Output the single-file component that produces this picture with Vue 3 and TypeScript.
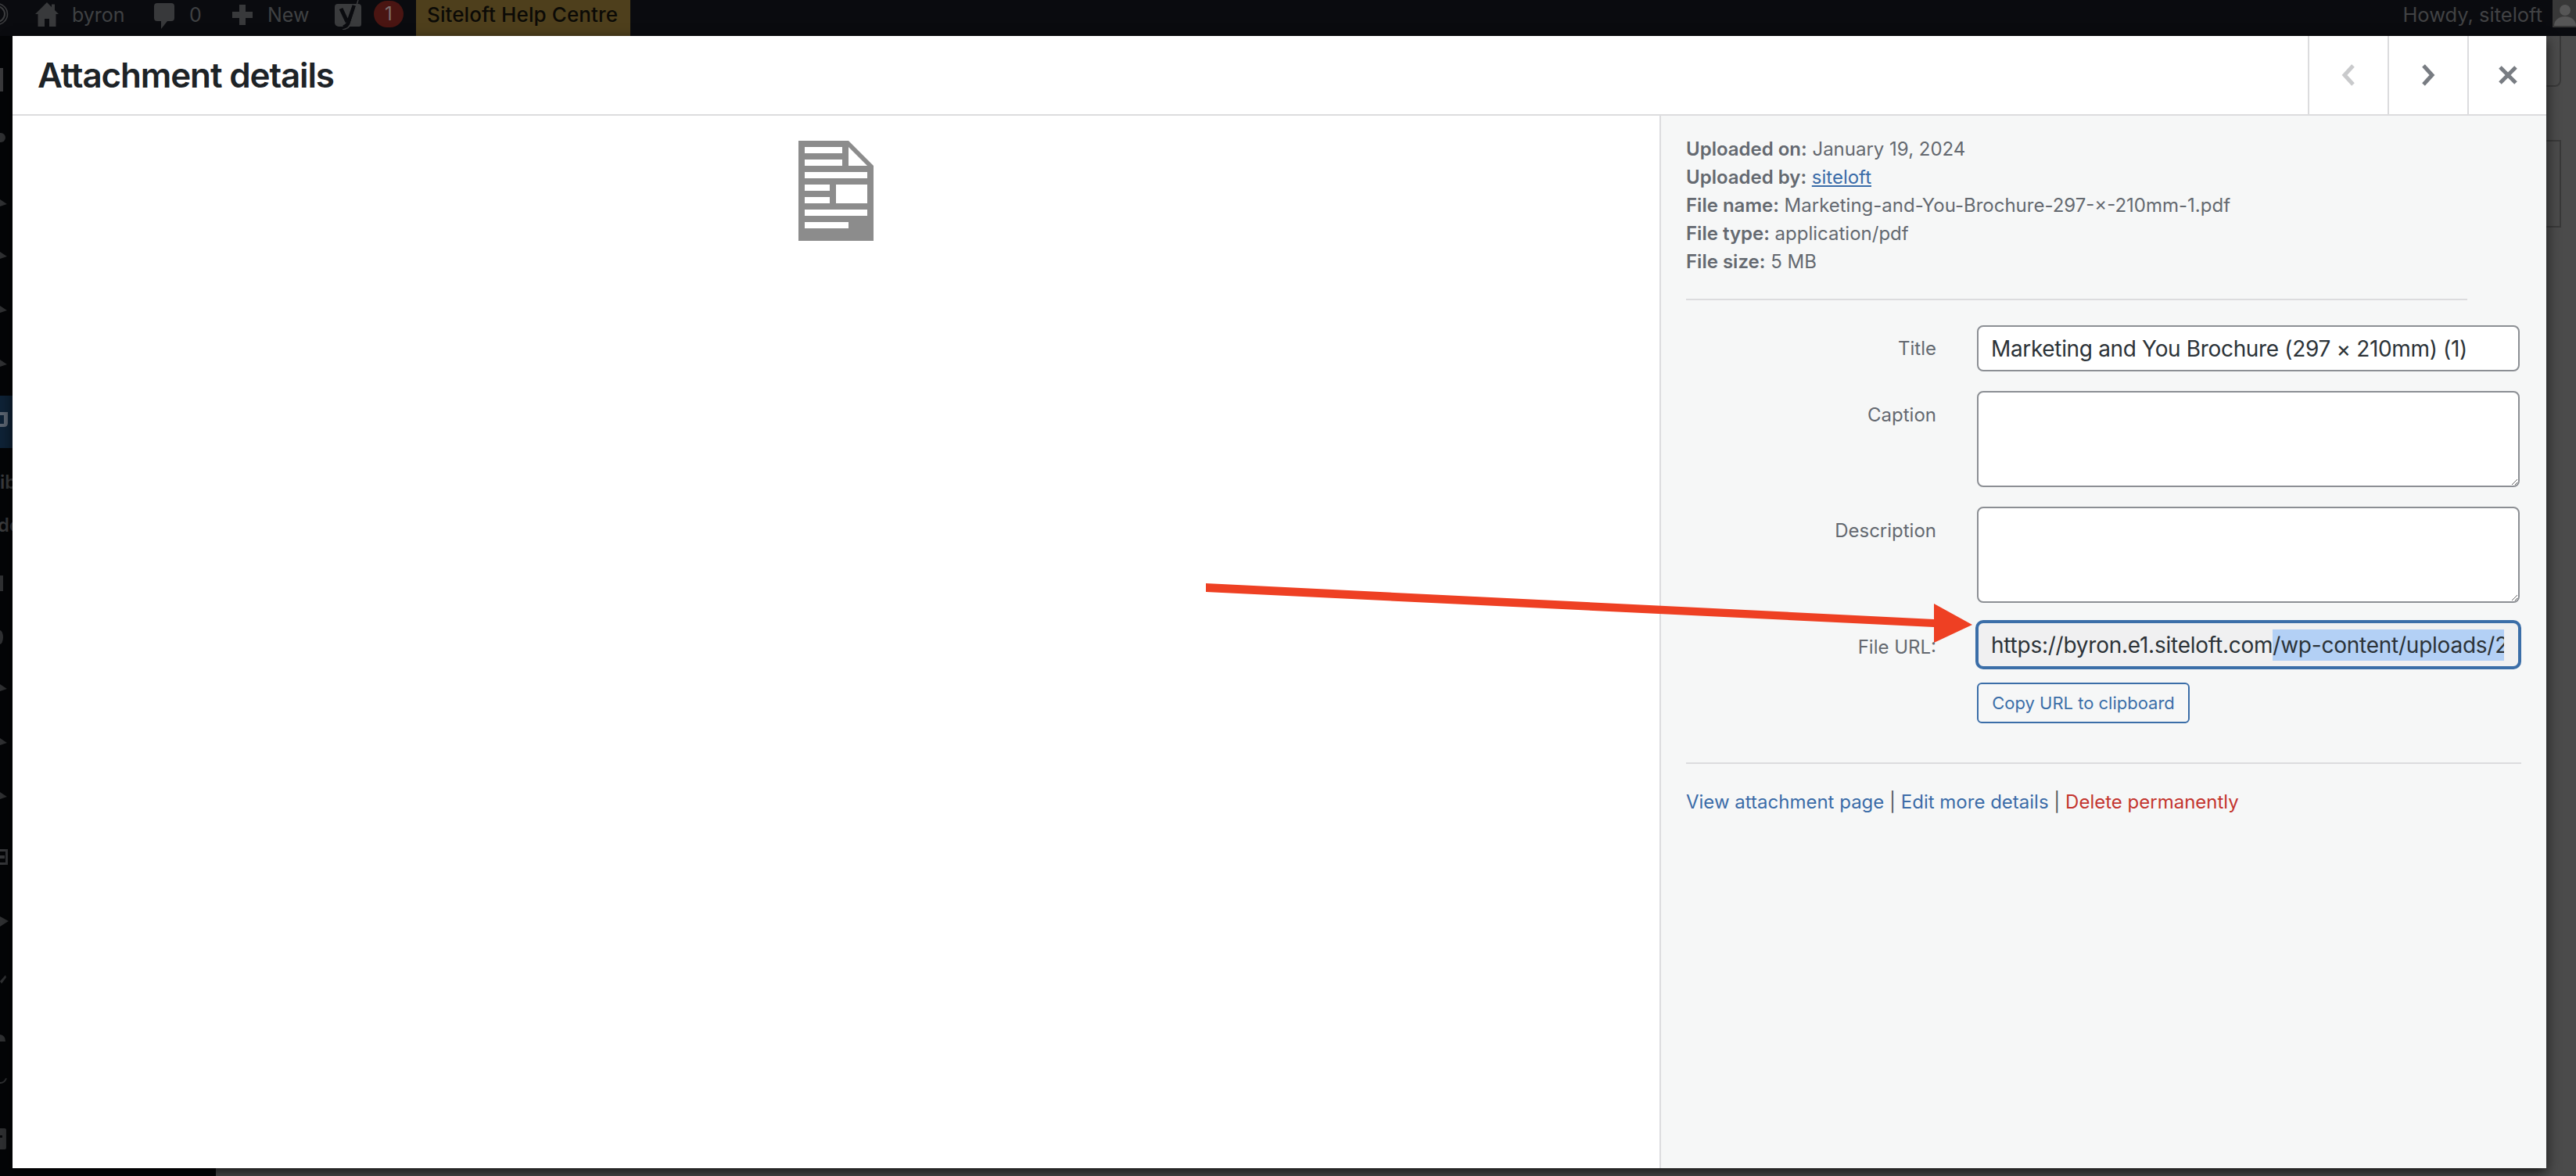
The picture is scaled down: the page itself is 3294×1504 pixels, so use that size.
<script setup lang="ts">
interface Detail { label: string; value: string; href?: boolean }
const details: Detail[] = [
  { label: 'Uploaded on:', value: 'January 19, 2024' },
  { label: 'Uploaded by:', value: 'siteloft', href: true },
  { label: 'File name:', value: 'Marketing-and-You-Brochure-297-×-210mm-1.pdf' },
  { label: 'File type:', value: 'application/pdf' },
  { label: 'File size:', value: '5 MB' },
]
const menuArrows: number[] = [260, 327, 396, 465, 880, 949, 1018]
</script>

<template>
  <div class="page">
    <header class="adminbar">
      <svg class="wp" width="14" height="36" viewBox="0 0 14 36">
        <circle cx="-4" cy="18" r="13.5" fill="none" stroke="#3c3d3f" stroke-width="1.6" />
        <circle cx="-4" cy="18" r="10" fill="none" stroke="#3c3d3f" stroke-width="2" />
      </svg>
      <svg class="ico home" width="30" height="31" viewBox="0 0 30 31">
        <path fill="#38393b" d="M15 0 0 15h3.500v16h8.500V21h6v10h8.500V15H30l-5-5V2.500h-4V6z" />
      </svg>
      <span class="bartext byron">byron</span>
      <svg class="ico bubble" width="26" height="33" viewBox="0 0 26 33">
        <path fill="#38393b" d="M4 0h18a4 4 0 0 1 4 4v15a4 4 0 0 1-4 4h-5l-8 10v-10H4a4 4 0 0 1-4-4V4a4 4 0 0 1 4-4z" />
      </svg>
      <span class="bartext zero">0</span>
      <svg class="ico plus" width="26" height="26" viewBox="0 0 26 26">
        <path fill="#38393b" d="M9 0h8v9h9v8h-9v9H9v-9H0V9h9z" />
      </svg>
      <span class="bartext new">New</span>
      <svg class="ico yoast" width="36" height="38" viewBox="0 0 36 38">
        <path fill="#3a3b3d" d="M5 5h26a4 4 0 0 1 4 4v22a3 3 0 0 1-3 3H6a5 5 0 0 1-5-5V9a4 4 0 0 1 4-4z" />
        <path fill="none" stroke="#0a0b0f" stroke-width="5" d="M9 11l8 17M26 7 18 30q-2 4-6 5" />
        <path fill="none" stroke="#3a3b3d" stroke-width="1.500" d="M31 0 21 32q-3 5-10 6" />
      </svg>
      <span class="badge">1</span>
      <span class="helpcentre">Siteloft Help Centre</span>
      <span class="howdy">Howdy, siteloft</span>
      <span class="avatar">
        <svg width="30" height="35" viewBox="0 0 30 35">
          <circle cx="16" cy="13" r="7" fill="#565656" />
          <path fill="#565656" d="M2 33c0-8 7-12 14-12s14 4 14 12z" />
        </svg>
      </span>
    </header>

    <div class="below">
      <aside class="adminmenu">
        <svg class="menuicons" width="16" height="1458" viewBox="0 46 16 1458">
          <rect x="0" y="87" width="4" height="30" fill="#3a3a3c" />
          <ellipse cx="1" cy="176" rx="6" ry="6" fill="#303133" />
          <path v-for="y in menuArrows" :key="y" :d="`M0 ${y - 5}L9 ${y + 1}L0 ${y + 4}z`" fill="#2f3032" />
          <rect x="0" y="506" width="16" height="67" fill="#0e2236" />
          <path d="M0 527h10v14q0 5-5 5H0v-4h5v-11H0z" fill="#5b6470" />
          <text x="0" y="625" class="menutext">ib</text>
          <text x="-3" y="680" class="menutext">de</text>
          <rect x="0" y="736" width="4" height="20" fill="#2f3032" />
          <ellipse cx="0" cy="815" rx="4" ry="9" fill="#2f3032" />
          <path d="M0 1086h10v20H0v-3h7v-14H0zM0 1094h6v4H0z" fill="#36373a" />
          <path d="M0 1172L11 1178L0 1185z" fill="#2f3032" />
          <path d="M0 1255L7 1247L8 1250L2 1258z" fill="#2f3032" />
          <path d="M0 1323q7 1 7 9H0z" fill="#2f3032" />
          <path d="M0 1385q6 0 8-6" fill="none" stroke="#2f3032" stroke-width="2" />
          <path d="M0 1443h6a2 2 0 0 1 2 2v23a2 2 0 0 1-2 2H0z" fill="#2e2f31" />
          <rect x="0" y="1452" width="3" height="3" fill="#050608" />
        </svg>
      </aside>
      <main class="maincontent">
        <div class="card first"></div>
        <div class="card second"></div>
      </main>
    </div>

    <section class="modal">
      <div class="modalhead">
        <h1>Attachment details</h1>
        <div class="navbuttons">
          <button class="navbutton" type="button" aria-label="Previous">
            <svg width="18" height="28" viewBox="0 0 18 28"><path d="M15 2 4 14l11 12" fill="none" stroke="#c9cacc" stroke-width="5" /></svg>
          </button>
          <button class="navbutton" type="button" aria-label="Next">
            <svg width="18" height="28" viewBox="0 0 18 28"><path d="M3 2l11 12L3 26" fill="none" stroke="#787c82" stroke-width="5" /></svg>
          </button>
          <button class="navbutton close" type="button" aria-label="Close">
            <svg width="24" height="24" viewBox="0 0 24 24"><path d="M2 2l20 20M22 2 2 22" fill="none" stroke="#787c82" stroke-width="5" /></svg>
          </button>
        </div>
      </div>
      <div class="modalbody">
        <div class="preview">
          <svg width="96" height="128" viewBox="0 0 48 64">
            <path fill="#8c8c8c" d="M0 0h32l16 16v48H0z" />
            <g fill="#fff">
              <rect x="4" y="4" width="24" height="4" />
              <rect x="4" y="12" width="24" height="4" />
              <path d="M32 4l12 12H32z" />
              <rect x="4" y="20" width="40" height="4" />
              <rect x="4" y="28" width="16" height="4" />
              <rect x="4" y="36" width="16" height="4" />
              <rect x="24" y="28" width="20" height="12" />
              <rect x="4" y="44" width="40" height="4" />
              <rect x="4" y="52" width="28" height="4" />
            </g>
          </svg>
        </div>
        <div class="details">
          <div class="meta">
            <div v-for="d in details" :key="d.label" class="metarow">
              <strong>{{ d.label }}</strong>
              {{ ' ' }}
              <a v-if="d.href" class="userlink">{{ d.value }}</a>
              <template v-else>{{ d.value }}</template>
            </div>
          </div>
          <hr class="rule short" />
          <div class="form">
            <label class="lbl center">Title</label>
            <input class="field titlefield" type="text" value="Marketing and You Brochure (297 × 210mm) (1)" />
            <label class="lbl top">Caption</label>
            <textarea class="field area"></textarea>
            <label class="lbl top">Description</label>
            <textarea class="field area"></textarea>
            <label class="lbl center url">File URL:</label>
            <div class="field urlfield"><div class="urlclip"><span>https://byron.e1.siteloft.com</span><span class="selected">/wp-content/uploads/2024/01/Marketing-and-You-Brochure-297-x-210mm-1.pdf</span></div></div>
            <span></span>
            <div class="copyrow"><button class="copy" type="button">Copy URL to clipboard</button></div>
          </div>
          <hr class="rule" />
          <div class="actions">
            <a>View attachment page</a> | <a>Edit more details</a> | <a class="del">Delete permanently</a>
          </div>
        </div>
      </div>
    </section>

    <svg class="annotation" width="3294" height="1504" viewBox="0 0 3294 1504">
      <path fill="#ee4023" d="M1542 746 2473 792V772L2522 799 2473 822V802L1542 757z" />
    </svg>
  </div>
</template>

<style scoped>
.page {
  position: relative;
  width: 3294px;
  height: 1504px;
  overflow: hidden;
  display: flex;
  flex-direction: column;
  font-family: Inter, "Liberation Sans", sans-serif;
}
.adminbar {
  flex: 0 0 46px;
  display: flex;
  align-items: flex-start;
  background: #0a0b0f;
  color: #3f4143;
}
.wp { margin-top: 0; flex: none; }
.ico { flex: none; display: block; }
.home { margin: 3px 0 0 31px; }
.bartext { font-size: 25px; line-height: 38px; }
.byron { margin-left: 17px; width: 68px; }
.bubble { margin: 4px 0 0 37px; }
.zero { margin-left: 19px; width: 16px; }
.plus { margin: 6px 0 0 39px; }
.new { margin-left: 19px; width: 55px; }
.yoast { margin: 0 0 0 30px; }
.badge {
  flex: none;
  width: 38px;
  height: 34px;
  margin: 1px 0 0 15px;
  border-radius: 17px;
  background: #4a1512;
  color: #7b6f6d;
  font-size: 24px;
  line-height: 34px;
  text-align: center;
}
.helpcentre {
  flex: none;
  width: 274px;
  height: 46px;
  margin-left: 16px;
  padding-right: 2px;
  box-sizing: border-box;
  background: #4e3f1c;
  color: #0b0a06;
  font-size: 26px;
  font-weight: 500;
  letter-spacing: 0.100px;
  line-height: 38px;
  text-align: center;
  white-space: nowrap;
}
.howdy {
  margin-left: auto;
  font-size: 25.500px;
  line-height: 38px;
  color: #414244;
}
.avatar {
  flex: none;
  width: 30px;
  height: 35px;
  margin-left: 13px;
  background: #383838;
}
.avatar svg { display: block; }
.below { flex: 1; display: flex; min-height: 0; }
.adminmenu { flex: 0 0 276px; background: #040507; }
.menuicons { display: block; }
.menutext { font-size: 24px; fill: #3a3b3d; font-weight: 600; }
.maincontent {
  flex: 1;
  background: #4b4b4b;
  padding-right: 19px;
}
.card { border: 2px solid #393939; border-left: 0; }
.card.first { height: 63px; border-top: 0; border-radius: 0 0 8px 0; }
.card.second { height: 108px; margin-top: 68px; }
.modal {
  position: absolute;
  left: 16px;
  top: 46px;
  width: 3240px;
  height: 1448px;
  display: flex;
  flex-direction: column;
  background: #fff;
  box-shadow: 0 5px 15px rgba(0, 0, 0, 0.7);
}
.modalhead {
  flex: 0 0 102px;
  display: flex;
  align-items: stretch;
  justify-content: space-between;
  border-bottom: 2px solid #dcdcde;
  box-sizing: border-box;
}
.modalhead h1 {
  margin: 0 0 0 32px;
  font-size: 44px;
  font-weight: 600;
  line-height: 100px;
  color: #1d2327;
  letter-spacing: -1.150px;
}
.navbuttons { display: flex; }
.navbutton {
  flex: 0 0 102px;
  padding: 0;
  background: none;
  border: 0;
  border-left: 2px solid #dcdcde;
  display: flex;
  align-items: center;
  justify-content: center;
}
.navbutton.close { flex-basis: 101px; }
.modalbody { flex: 1; display: flex; min-height: 0; }
.preview {
  flex: 1;
  display: flex;
  justify-content: center;
  align-items: flex-start;
  padding-top: 32px;
}
.preview svg { display: block; }
.details {
  flex: 0 0 1134px;
  box-sizing: border-box;
  background: #f6f7f7;
  border-left: 2px solid #dcdcde;
  padding: 25px 32px 0 32px;
  font-size: 24px;
  line-height: 36px;
  color: #646970;
}
.metarow { white-space: nowrap; }
.metarow strong { font-weight: 600; }
.userlink { color: #3b6ca8; text-decoration: underline; }
.rule {
  height: 2px;
  margin: 29px 0 32px;
  border: 0;
  background: #dcdcde;
}
.rule.short { width: 999px; }
.form {
  display: grid;
  grid-template-columns: 320px 694px;
  column-gap: 52px;
  row-gap: 25px;
}
.lbl { text-align: right; }
.lbl.center { align-self: center; }
.lbl.top { padding-top: 13px; }
.lbl.url { align-self: start; padding-top: 14px; }
.field {
  display: block;
  box-sizing: border-box;
  width: 694px;
  height: 59px;
  margin: 0;
  padding: 0 15px 0 16px;
  border: 2px solid #8c8f94;
  border-radius: 8px;
  background: #fff;
  color: #2c3338;
  font: 28px/40px Inter, "Liberation Sans", sans-serif;
  letter-spacing: -0.240px;
  outline: none;
}
.titlefield { letter-spacing: -0.340px; }
.area { height: 123px; resize: both; padding: 8px 15px; }
.urlfield {
  background: #f0f0f1;
  border-color: #3b6ea8;
  box-shadow: 0 0 0 2px #3b6ea8;
  padding: 8px 18px 0 16px;
  margin-top: -1px;
}
.urlclip {
  height: 40px;
  overflow: hidden;
  white-space: nowrap;
}
.selected { background: #b3d0f5; display: inline-block; }
.copyrow { margin-top: -6px; }
.copy {
  display: block;
  box-sizing: border-box;
  width: 272px;
  height: 52px;
  padding: 0;
  background: transparent;
  border: 2px solid #3b6ea8;
  border-radius: 6px;
  color: #3b6ea8;
  font: 22px/48px Inter, "Liberation Sans", sans-serif;
  white-space: nowrap;
}
.form + .rule { margin: 50px 0 31px; }
.actions { color: #50575e; white-space: nowrap; }
.actions a { color: #3b6ca8; }
.actions a.del { color: #c4352f; }
.annotation {
  position: absolute;
  left: 0;
  top: 0;
  pointer-events: none;
}
</style>
